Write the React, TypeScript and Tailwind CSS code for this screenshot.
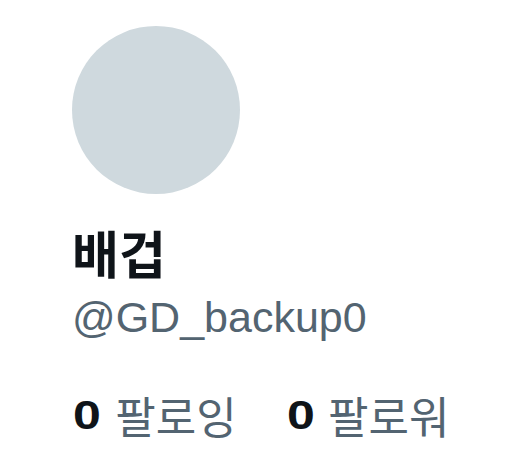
import React from "react";

const kr = { fontFamily: '"Noto Sans CJK KR", sans-serif' };
const lat = { fontFamily: '"Liberation Sans", Arial, sans-serif' };

export default function App() {
  return (
    <div className="w-[516px] h-[466px] bg-white pl-[72px] pt-[26px]" style={lat}>
      <div className="w-[168px] h-[168px] rounded-full bg-[#cfd9de]" />
      <div className="mt-[28px] text-[51px] leading-[60px] font-bold text-[#0f1419]" style={kr}>
        배겁
      </div>
      <div className="mt-[10px] text-[43px] leading-[50px] text-[#536471]">
        @GD_backup0
      </div>
      <div className="mt-[47px] flex items-center text-[44px] leading-[52px]">
        <div className="flex items-center">
          <span className="inline-block font-bold text-[#0f1419] text-[40px] scale-x-125 origin-left ml-[1px]">0</span>
          <span className="ml-[20px] text-[#536471]" style={kr}>팔로잉</span>
        </div>
        <div className="ml-[50px] flex items-center">
          <span className="inline-block font-bold text-[#0f1419] text-[40px] scale-x-125 origin-left">0</span>
          <span className="ml-[19px] text-[#536471]" style={kr}>팔로워</span>
        </div>
      </div>
    </div>
  );
}
